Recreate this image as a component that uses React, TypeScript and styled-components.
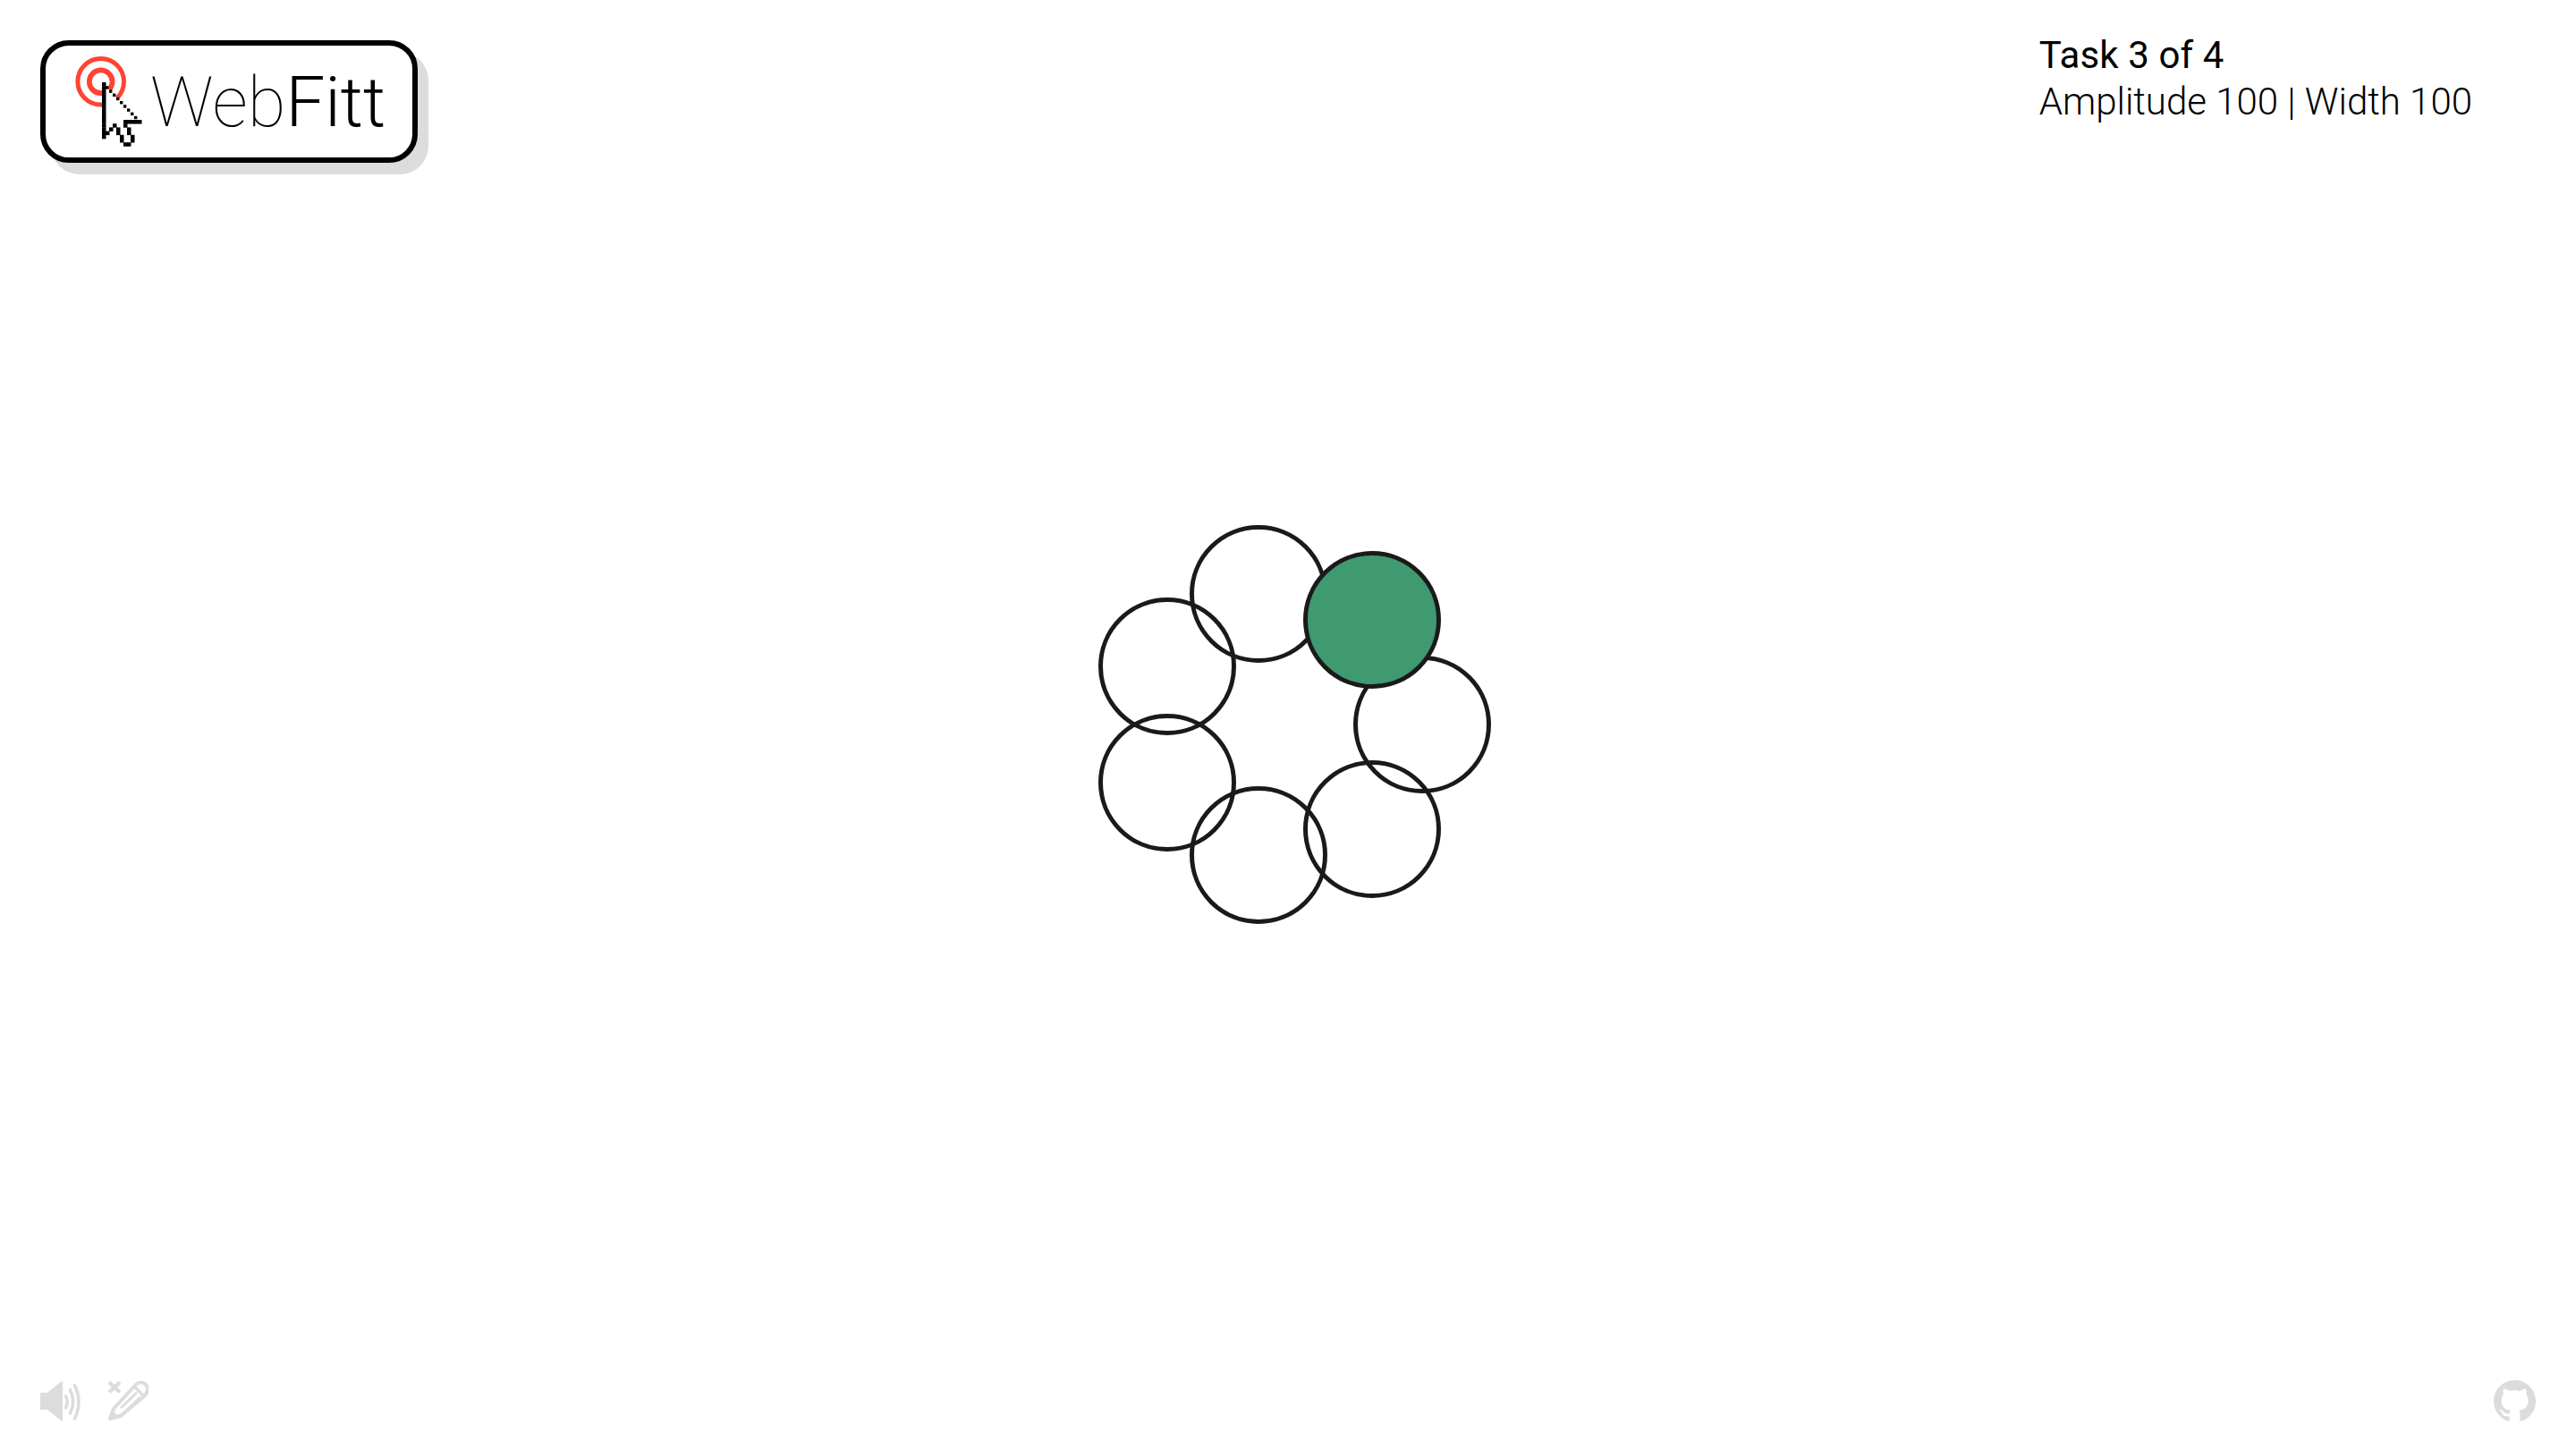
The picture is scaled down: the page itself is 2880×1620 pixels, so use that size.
import React from "react";
import styled, { createGlobalStyle } from "styled-components";

const Global = createGlobalStyle`
  html, body { margin: 0; padding: 0; background: #fff; }
  body { font-family: Roboto, "Liberation Sans", sans-serif; }
`;

const Page = styled.main`
  position: relative;
  box-sizing: border-box;
  width: 100%;
  height: 100vh;
  overflow: hidden;
  display: flex;
  flex-direction: column;
  justify-content: space-between;
`;

const Header = styled.header`
  display: flex;
  justify-content: space-between;
  align-items: flex-start;
  padding: 45px 116px 0 45px;
`;

const Logo = styled.div`
  box-sizing: border-box;
  width: 422px;
  height: 137px;
  border: 6px solid #000;
  border-radius: 32px;
  box-shadow: 12px 13px 0 #dcdcdc;
  background: #fff;
  display: flex;
  align-items: center;
  padding-left: 30px;
`;

const LogoMark = styled.svg`
  width: 100px;
  height: 112px;
  flex: none;
  align-self: flex-start;
  margin-top: 8px;
`;

const Wordmark = styled.div`
  margin-left: -13px;
  margin-top: 3px;
  font-size: 78px;
  line-height: 1;
  color: #000;
  white-space: nowrap;
`;

const Thin = styled.span`
  font-weight: 100;
`;

const Light = styled.span`
  font-weight: 300;
`;

const TaskInfo = styled.div`
  font-size: 42px;
  line-height: 52px;
  color: #000;
  margin-top: -9px;
`;

const TaskTitle = styled.div`
  font-weight: 400;
  letter-spacing: 0.1px;
`;

const TaskDetail = styled.div`
  font-weight: 300;
`;

const Stage = styled.div`
  position: absolute;
  left: 50%;
  top: 50%;
  width: 0;
  height: 0;
`;

const Target = styled.div<{ $active?: boolean }>`
  position: absolute;
  box-sizing: border-box;
  width: 154px;
  height: 154px;
  margin: -77px 0 0 -77px;
  border-radius: 50%;
  border: 5px solid #1a1a1a;
  background: ${(p) => (p.$active ? "#3f9971" : "transparent")};
  z-index: ${(p) => (p.$active ? 1 : 0)};
`;

const Footer = styled.footer`
  display: flex;
  justify-content: space-between;
  align-items: flex-end;
  padding: 0 45px 30px 45px;
`;

const Tools = styled.div`
  display: flex;
  align-items: flex-start;
  gap: 29px;
`;

const ToolIcon = styled.svg<{ $w: number; $h: number }>`
  display: block;
  width: ${(p) => p.$w}px;
  height: ${(p) => p.$h}px;
  color: #dcdcdc;
`;

const CURSOR = [
  "X..........",
  "XX.........",
  "X X........",
  "X  X.......",
  "X   X......",
  "X    X.....",
  "X     X....",
  "X      X...",
  "X       X..",
  "X        X.",
  "X     XXXXX",
  "X  X  X....",
  "X X.X  X...",
  "XX..X  X...",
  "X....X  X..",
  ".....X  X..",
  "......XX...",
];

const PX = 4;
const PY = 4.2;
const cursorRects: { x: number; y: number; diag: boolean }[] = [];
CURSOR.forEach((row, y) =>
  row.split("").forEach((c, x) => {
    if (c === "X") cursorRects.push({ x, y, diag: x > 0 && y < 10 });
  })
);

const targets = Array.from({ length: 7 }, (_, i) => {
  const a = (i * 2 * Math.PI) / 7;
  return { x: 150 * Math.cos(a), y: 150 * Math.sin(a), active: i === 6 };
});

export default function App() {
  return (
    <>
      <Global />
      <Page>
        <Header>
          <Logo>
            <LogoMark viewBox="0 0 100 112">
              <circle cx="31.7" cy="32.3" r="25.8" fill="none" stroke="#ff4433" strokeWidth="5" />
              <circle cx="31.7" cy="32.3" r="12.9" fill="none" stroke="#ff4433" strokeWidth="5.8" />
              <g transform="translate(33 33)">
                <path
                  d={`M0 0 L0 ${15 * PY} L${3 * PX} ${12 * PY} L${6 * PX} ${17 * PY} L${9 * PX} ${16 * PY} L${7 * PX} ${11 * PY} L${11 * PX} ${11 * PY} Z`}
                  fill="#fff"
                />
                {cursorRects.map((r) => (
                  <rect
                    key={`${r.x}-${r.y}`}
                    x={r.x * PX}
                    y={r.y * PY}
                    width={r.diag ? 3.4 : PX + 0.5}
                    height={r.diag ? 3.4 : PY + 0.3}
                    fill="#000"
                  />
                ))}
              </g>
            </LogoMark>
            <Wordmark>
              <Thin>Web</Thin>
              <Light>Fitt</Light>
            </Wordmark>
          </Logo>
          <TaskInfo>
            <TaskTitle>Task 3 of 4</TaskTitle>
            <TaskDetail>Amplitude 100 | Width 100</TaskDetail>
          </TaskInfo>
        </Header>
        <Stage>
          {targets.map((t, i) => (
            <Target
              key={i}
              $active={t.active}
              style={{ left: t.x, top: t.y }}
            />
          ))}
        </Stage>
        <Footer>
          <Tools>
            <ToolIcon $w={46} $h={46} viewBox="0 0 46 46">
              <path
                d="M0 13 H8 L23.5 0.5 Q25 0 25 1.5 V43.5 Q25 45 23.5 44.5 L8 32 H0 Z"
                fill="currentColor"
              />
              <g fill="none" stroke="currentColor" strokeWidth="3.6" strokeLinecap="round">
                <path d="M28.5 17 Q32 23.5 28.5 30" />
                <path d="M33.5 10 Q40 23.5 33.5 36" />
                <path d="M38.5 5 Q47.5 23.5 38.5 42" />
              </g>
            </ToolIcon>
            <ToolIcon $w={46} $h={44} viewBox="0 0 46 44">
              <path d="M2 1.5 L14 12.5 M14 1.5 L2 12.5" fill="none" stroke="currentColor" strokeWidth="4.4" />
              <g fill="none" stroke="currentColor" strokeLinejoin="round">
                <path d="M3 42 L7 31 L30 6 Q35 0 40 2 Q46 5 45 11 Q44 14 41 17 L15 39 Z" strokeWidth="4" />
                <path d="M30 6 L41 17" strokeWidth="3.4" />
                <path d="M15 30 L33 13 M19 35 L37 18" strokeWidth="3" />
              </g>
              <path d="M3 42 L6 33 L13 40 Z" fill="currentColor" />
            </ToolIcon>
          </Tools>
          <ToolIcon $w={47} $h={47} viewBox="0 0 16 16">
            <path
              fill="currentColor"
              fillRule="evenodd"
              d="M8 0C3.58 0 0 3.58 0 8c0 3.54 2.29 6.53 5.47 7.59.4.07.55-.17.55-.38 0-.19-.01-.82-.01-1.49-2.01.37-2.53-.49-2.69-.94-.09-.23-.48-.94-.82-1.13-.28-.15-.68-.52-.01-.53.63-.01 1.08.58 1.23.82.72 1.21 1.87.87 2.33.66.07-.52.28-.87.51-1.07-1.78-.2-3.64-.89-3.64-3.95 0-.87.31-1.59.82-2.15-.08-.2-.36-1.02.08-2.12 0 0 .67-.21 2.2.82.64-.18 1.32-.27 2-.27.68 0 1.36.09 2 .27 1.53-1.04 2.2-.82 2.2-.82.44 1.1.16 1.92.08 2.12.51.56.82 1.27.82 2.15 0 3.07-1.87 3.75-3.65 3.95.29.25.54.73.54 1.48 0 1.07-.01 1.93-.01 2.2 0 .21.15.46.55.38A8.013 8.013 0 0016 8c0-4.42-3.58-8-8-8z"
            />
          </ToolIcon>
        </Footer>
      </Page>
    </>
  );
}
